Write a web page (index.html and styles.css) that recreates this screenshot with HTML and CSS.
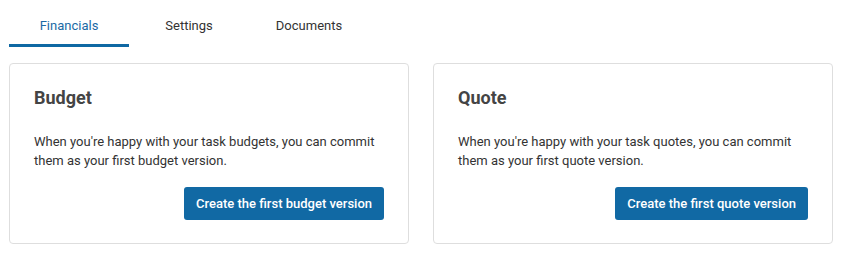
FILE: index.html
```html
<!DOCTYPE html>
<html>
<head>
<meta charset="utf-8">
<link rel="stylesheet" href="styles.css">
</head>
<body>
<div class="page">
  <nav class="tabs">
    <div class="tab active">Financials</div>
    <div class="tab">Settings</div>
    <div class="tab">Documents</div>
  </nav>
  <div class="cards">
    <section class="card">
      <h2 class="card-title">Budget</h2>
      <p class="card-text">When you're happy with your task budgets, you can commit them as your first budget version.</p>
      <div class="card-actions"><button class="btn">Create the first budget version</button></div>
    </section>
    <section class="card">
      <h2 class="card-title">Quote</h2>
      <p class="card-text">When you're happy with your task quotes, you can commit them as your first quote version.</p>
      <div class="card-actions"><button class="btn">Create the first quote version</button></div>
    </section>
  </div>
</div>
</body>
</html>
```
FILE: styles.css
```css
* { box-sizing: border-box; }
body {
  margin: 0;
  background: #fff;
  font-family: Roboto, "Liberation Sans", sans-serif;
  color: #333;
}
.page {
  padding: 9px 0 0 9px;
}
.tabs {
  display: flex;
  height: 38px;
}
.tab {
  width: 120px;
  text-align: center;
  font-size: 13px;
  line-height: 16px;
  padding-top: 9px;
  color: #333;
  border-bottom: 3px solid transparent;
}
.tab.active {
  color: #1a6aa5;
  border-bottom-color: #0f68a3;
}
.cards {
  display: flex;
  gap: 24px;
  margin-top: 16px;
}
.card {
  width: 400px;
  height: 181px;
  border: 1px solid #dedede;
  border-radius: 4px;
  padding: 23px 24px 23px 24px;
  display: flex;
  flex-direction: column;
}
.card-title {
  margin: 0;
  font-size: 18px;
  line-height: 22px;
  font-weight: 700;
  color: #444;
}
.card-text {
  margin: 23px 0 0 0;
  font-size: 13px;
  line-height: 19px;
  color: #333;
}
.card-actions {
  display: flex;
  justify-content: flex-end;
  margin-top: 17px;
}
.btn {
  height: 33px;
  padding: 0 12px;
  border: none;
  border-radius: 3px;
  background: #1169a4;
  color: #fff;
  font-family: Roboto, "Liberation Sans", sans-serif;
  font-size: 13px;
  font-weight: 500;
}
```
